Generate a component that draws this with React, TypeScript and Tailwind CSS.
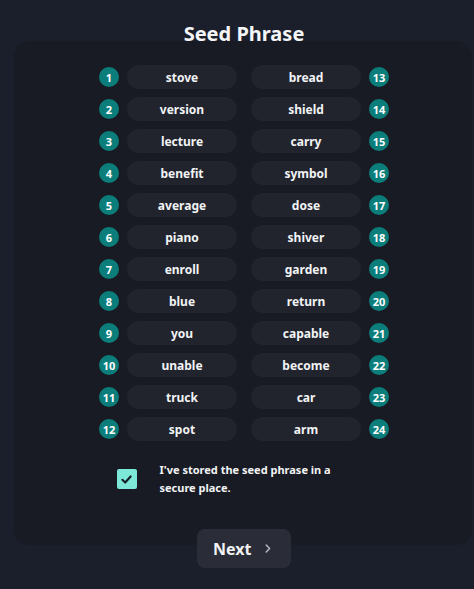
import React from "react";

const left = ["stove","version","lecture","benefit","average","piano","enroll","blue","you","unable","truck","spot"];
const right = ["bread","shield","carry","symbol","dose","shiver","garden","return","capable","become","car","arm"];

function Badge({ n }: { n: number }) {
  return (
    <div className="w-[20px] h-[20px] rounded-full bg-[#0b7d7b] flex items-center justify-center text-[11px] font-bold text-white leading-none">
      {n}
    </div>
  );
}

function Pill({ w }: { w: string }) {
  return (
    <div className="w-[110px] h-[24px] rounded-full bg-[#21242d] flex items-center justify-center pt-[2px] text-[12px] font-bold text-[#f2f3f5]">
      {w}
    </div>
  );
}

export default function App() {
  return (
    <div
      className="min-h-[589px] w-full bg-[#1b1f2b] flex flex-col text-white overflow-hidden"
      style={{ fontFamily: '"Noto Sans", "Open Sans", sans-serif' }}
    >
      <div className="h-[41px] pt-[20px] flex justify-center">
        <h1 className="text-[20px] leading-[28px] font-bold text-[#f4f5f7] ml-[14px]">Seed Phrase</h1>
      </div>
      <div className="ml-[14px] w-[458px] rounded-[16px] bg-[#181b23] pt-[24px] pb-[48px] flex flex-col items-center">
        <div className="flex flex-col gap-[8px] ml-[2px]">
          {left.map((w, i) => (
            <div key={i} className="flex items-center">
              <Badge n={i + 1} />
              <div className="ml-[8px]"><Pill w={w} /></div>
              <div className="ml-[14px]"><Pill w={right[i]} /></div>
              <div className="ml-[8px]"><Badge n={i + 13} /></div>
            </div>
          ))}
        </div>
        <div className="mt-[20px] flex items-center gap-[23px]">
          <div className="w-[20px] h-[20px] rounded-[2px] bg-[#7de8d8] flex items-center justify-center">
            <svg width="13" height="13" viewBox="0 0 12 12" fill="none">
              <path d="M2.2 6.3 L4.8 8.8 L9.8 3.2" stroke="#17212a" strokeWidth="2" strokeLinecap="round" strokeLinejoin="round" />
            </svg>
          </div>
          <div className="w-[210px] text-[11px] leading-[18px] font-bold text-[#f2f3f5] whitespace-nowrap">
            I've stored the seed phrase in a<br />secure place.
          </div>
        </div>
      </div>
      <div className="relative z-10 -mt-[16px] flex justify-center ml-[14px]">
        <button className="w-[94px] h-[39px] rounded-[8px] bg-[#2a2d38] flex items-center pl-[16px]">
          <span className="text-[16px] font-bold text-[#f2f3f5]">Next</span>
          <svg className="ml-[14px]" width="6" height="9" viewBox="0 0 6 9" fill="none">
            <path d="M1.2 1 L4.6 4.5 L1.2 8" stroke="#b9bdc8" strokeWidth="1.4" strokeLinecap="round" strokeLinejoin="round" />
          </svg>
        </button>
      </div>
    </div>
  );
}
